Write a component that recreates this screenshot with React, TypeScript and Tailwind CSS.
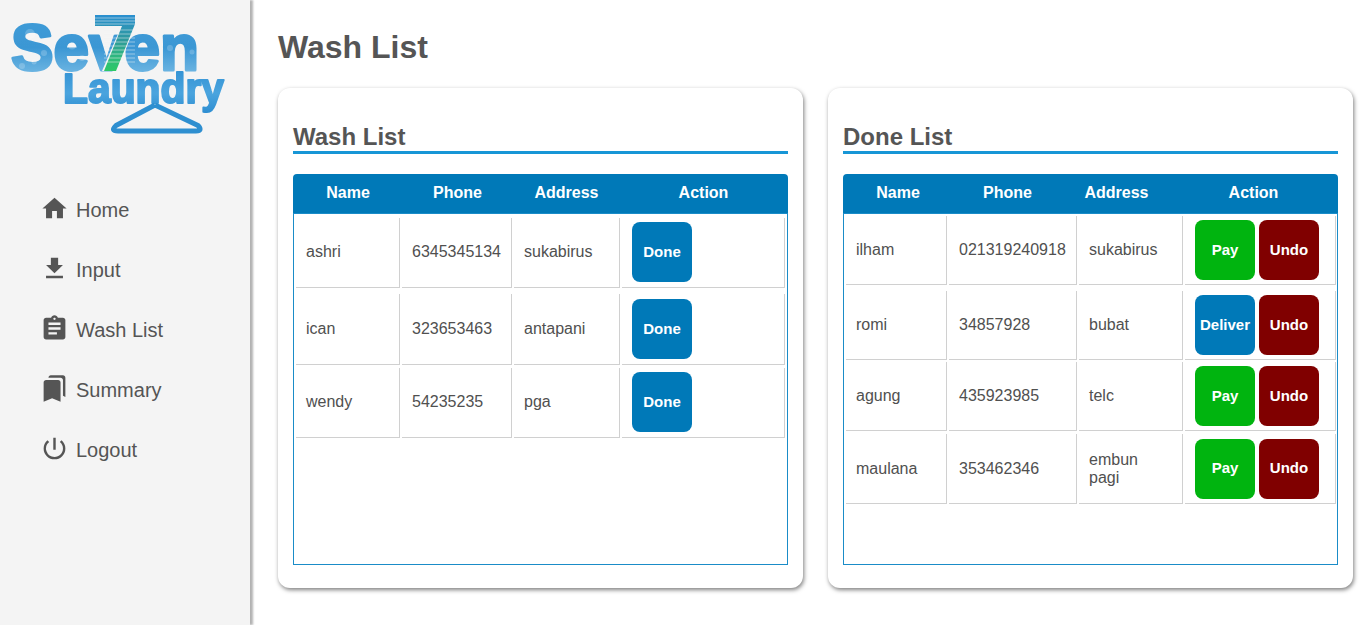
import React from "react";
import {
  MdHome,
  MdFileDownload,
  MdAssignment,
  MdBookmarks,
  MdPowerSettingsNew,
} from "react-icons/md";

const FONT = "[font-family:'Liberation_Sans',Arial,sans-serif]";

function Logo() {
  return (
    <svg width="250" height="180" viewBox="0 0 250 180" className="block">
      <defs>
        <linearGradient id="seven" x1="0" y1="0" x2="0" y2="1">
          <stop offset="0" stopColor="#3f9cd8" />
          <stop offset="0.5" stopColor="#3b97d4" />
          <stop offset="0.85" stopColor="#6db5e2" />
          <stop offset="1" stopColor="#a9d4ef" />
        </linearGradient>
        <linearGradient id="laundry" x1="0" y1="0" x2="0" y2="1">
          <stop offset="0" stopColor="#2f8fd2" />
          <stop offset="0.6" stopColor="#4aa4de" />
          <stop offset="1" stopColor="#2f8fd2" />
        </linearGradient>
        <linearGradient id="seven7" x1="0" y1="0" x2="0" y2="1">
          <stop offset="0" stopColor="#2b8fd0" />
          <stop offset="0.45" stopColor="#2f9a9c" />
          <stop offset="0.8" stopColor="#2fbd78" />
          <stop offset="1" stopColor="#2ec866" />
        </linearGradient>
        <filter id="soft" x="-5%" y="-5%" width="110%" height="110%">
          <feGaussianBlur stdDeviation="0.5" />
        </filter>
      </defs>
      <g filter="url(#soft)">
        <text
          x="11"
          y="70"
          fontFamily="'Liberation Sans', Arial, sans-serif"
          fontWeight="700"
          fontSize="65"
          textLength="188"
          lengthAdjust="spacingAndGlyphs"
          fill="url(#seven)"
          stroke="url(#seven)"
          strokeWidth="3"
          strokeLinejoin="round"
        >
          Seven
        </text>
        <polygon points="95,15 136,15 136,24 117,71 102,71 121,27 95,26" fill="#f4f4f4" />
        <polygon points="95,15 135,15 135,24 116,71 104,71 122,26 95,26" fill="url(#seven7)" />
        <g stroke="#f4f4f4" strokeWidth="0.8" opacity="0.6">
          <line x1="95" y1="18" x2="136" y2="18" />
          <line x1="95" y1="21" x2="136" y2="21" />
          <line x1="95" y1="24" x2="136" y2="24" />
          <line x1="104" y1="30" x2="135" y2="30" />
          <line x1="104" y1="34" x2="135" y2="34" />
          <line x1="104" y1="38" x2="135" y2="38" />
          <line x1="104" y1="42" x2="135" y2="42" />
          <line x1="104" y1="46" x2="135" y2="46" />
          <line x1="104" y1="50" x2="135" y2="50" />
          <line x1="104" y1="54" x2="135" y2="54" />
          <line x1="104" y1="58" x2="135" y2="58" />
          <line x1="104" y1="62" x2="135" y2="62" />
        </g>
        <g fill="#ffffff" opacity="0.2">
          <circle cx="22" cy="66" r="3" />
          <circle cx="34" cy="62" r="2.5" />
          <circle cx="44" cy="53" r="3" />
          <circle cx="72" cy="46" r="3.5" />
          <circle cx="82" cy="58" r="3" />
          <circle cx="170" cy="48" r="3" />
          <circle cx="192" cy="52" r="2.5" />
          <circle cx="30" cy="34" r="5" />
        </g>
        <text
          x="63"
          y="103"
          fontFamily="'Liberation Sans', Arial, sans-serif"
          fontWeight="700"
          fontSize="42"
          textLength="161"
          lengthAdjust="spacingAndGlyphs"
          fill="url(#laundry)"
          stroke="url(#laundry)"
          strokeWidth="2"
          strokeLinejoin="round"
        >
          Laundry
        </text>
        <path
          d="M155 105 L116 125.5 Q110 131 118 131 L196 131 Q203 131 198 125.5 L155 105"
          fill="none"
          stroke="#2f8fd0"
          strokeWidth="5"
          strokeLinejoin="round"
        />
      </g>
    </svg>
  );
}

const nav = [
  { label: "Home", Icon: MdHome },
  { label: "Input", Icon: MdFileDownload },
  { label: "Wash List", Icon: MdAssignment },
  { label: "Summary", Icon: MdBookmarks },
  { label: "Logout", Icon: MdPowerSettingsNew },
];

function Sidebar() {
  return (
    <aside className="w-[250px] h-[625px] shrink-0 bg-[#f4f4f4] shadow-[3px_0_2px_rgba(0,0,0,0.3)]">
      <Logo />
      <nav className="pl-[40px]">
        {nav.map(({ label, Icon }) => (
          <div key={label} className="flex items-center h-[60px] text-[20px] text-[#555555]">
            <Icon size={29} className="mb-[4px] mr-[7px] shrink-0" />
            <span>{label}</span>
          </div>
        ))}
      </nav>
    </aside>
  );
}

type Btn = { label: string; tone: string };
type Row = { cells: React.ReactNode[]; buttons: Btn[]; rowClass: string };

const BLUE = "bg-[#0079b8]";
const GREEN = "bg-[#00b40f]";
const RED = "bg-[#800000]";

const washRows: Row[] = [
  { cells: ["ashri", "6345345134", "sukabirus"], buttons: [{ label: "Done", tone: BLUE }], rowClass: "h-[70px] mt-[4px] [&>div]:pb-[1px]" },
  { cells: ["ican", "323653463", "antapani"], buttons: [{ label: "Done", tone: BLUE }], rowClass: "h-[71px] mt-[6px]" },
  { cells: ["wendy", "54235235", "pga"], buttons: [{ label: "Done", tone: BLUE }], rowClass: "h-[70px] mt-[3px] [&>div]:pb-[1px]" },
];

const doneRows: Row[] = [
  {
    cells: ["ilham", "021319240918", "sukabirus"],
    buttons: [{ label: "Pay", tone: GREEN }, { label: "Undo", tone: RED }],
    rowClass: "h-[69px] mt-[2px]",
  },
  {
    cells: ["romi", "34857928", "bubat"],
    buttons: [{ label: "Deliver", tone: BLUE }, { label: "Undo", tone: RED }],
    rowClass: "h-[69px] mt-[6px]",
  },
  {
    cells: ["agung", "435923985", "telc"],
    buttons: [{ label: "Pay", tone: GREEN }, { label: "Undo", tone: RED }],
    rowClass: "h-[69px] mt-[2px]",
  },
  {
    cells: ["maulana", "353462346", <>embun<br />pagi</>],
    buttons: [{ label: "Pay", tone: GREEN }, { label: "Undo", tone: RED }],
    rowClass: "h-[70px] mt-[3px]",
  },
];

function Panel({ title, rows, gridClass }: { title: string; rows: Row[]; gridClass: string }) {
  return (
    <section className="w-[525px] h-[500px] p-[15px] bg-white rounded-[12px] shadow-[1px_2px_4px_rgba(0,0,0,0.5)]">
      <h2 className="pt-[20px] text-[24px] leading-[28px] font-bold text-[#555555] border-b-[3px] border-[#1796d6] mb-[20px]">
        {title}
      </h2>
      <div className="grid grid-cols-[110px_109px_109px_165px] h-[39px] pb-[2px] items-center rounded-t-[4px] bg-[#0079b8] text-white font-bold text-[16px] text-center">
        <div>Name</div>
        <div>Phone</div>
        <div>Address</div>
        <div>Action</div>
      </div>
      <div className="h-[352px] border border-[#1a8cc8] pl-[2px]">
        {rows.map((row, i) => (
          <div key={i} className={`grid gap-x-[2px] ${gridClass} ${row.rowClass}`}>
            {row.cells.map((cell, j) => (
              <div
                key={j}
                className="flex items-center pl-[10px] pr-[8px] border-r border-b border-[#d0d0d0] text-[16px] leading-[18px] text-[#505050]"
              >
                <span>{cell}</span>
              </div>
            ))}
            <div className="flex items-center gap-[4px] pl-[10px] border-r border-b border-[#d0d0d0]">
              {row.buttons.map((b, k) => (
                <button
                  key={k}
                  className={`w-[60px] h-[60px] rounded-[8px] text-white font-bold text-[15px] whitespace-nowrap ${b.tone}`}
                >
                  {b.label}
                </button>
              ))}
            </div>
          </div>
        ))}
      </div>
    </section>
  );
}

export default function App() {
  return (
    <div className={`flex h-[625px] w-[1365px] overflow-hidden bg-white ${FONT}`}>
      <Sidebar />
      <main className="pl-[28px] pt-[29px]">
        <h1 className="text-[32px] leading-[37px] font-bold text-[#555555] mb-[22px]">Wash List</h1>
        <div className="flex gap-[25px]">
          <Panel title="Wash List" rows={washRows} gridClass="grid-cols-[104px_110px_106px_163px]" />
          <Panel title="Done List" rows={doneRows} gridClass="grid-cols-[101px_128px_104px_151px]" />
        </div>
      </main>
    </div>
  );
}
